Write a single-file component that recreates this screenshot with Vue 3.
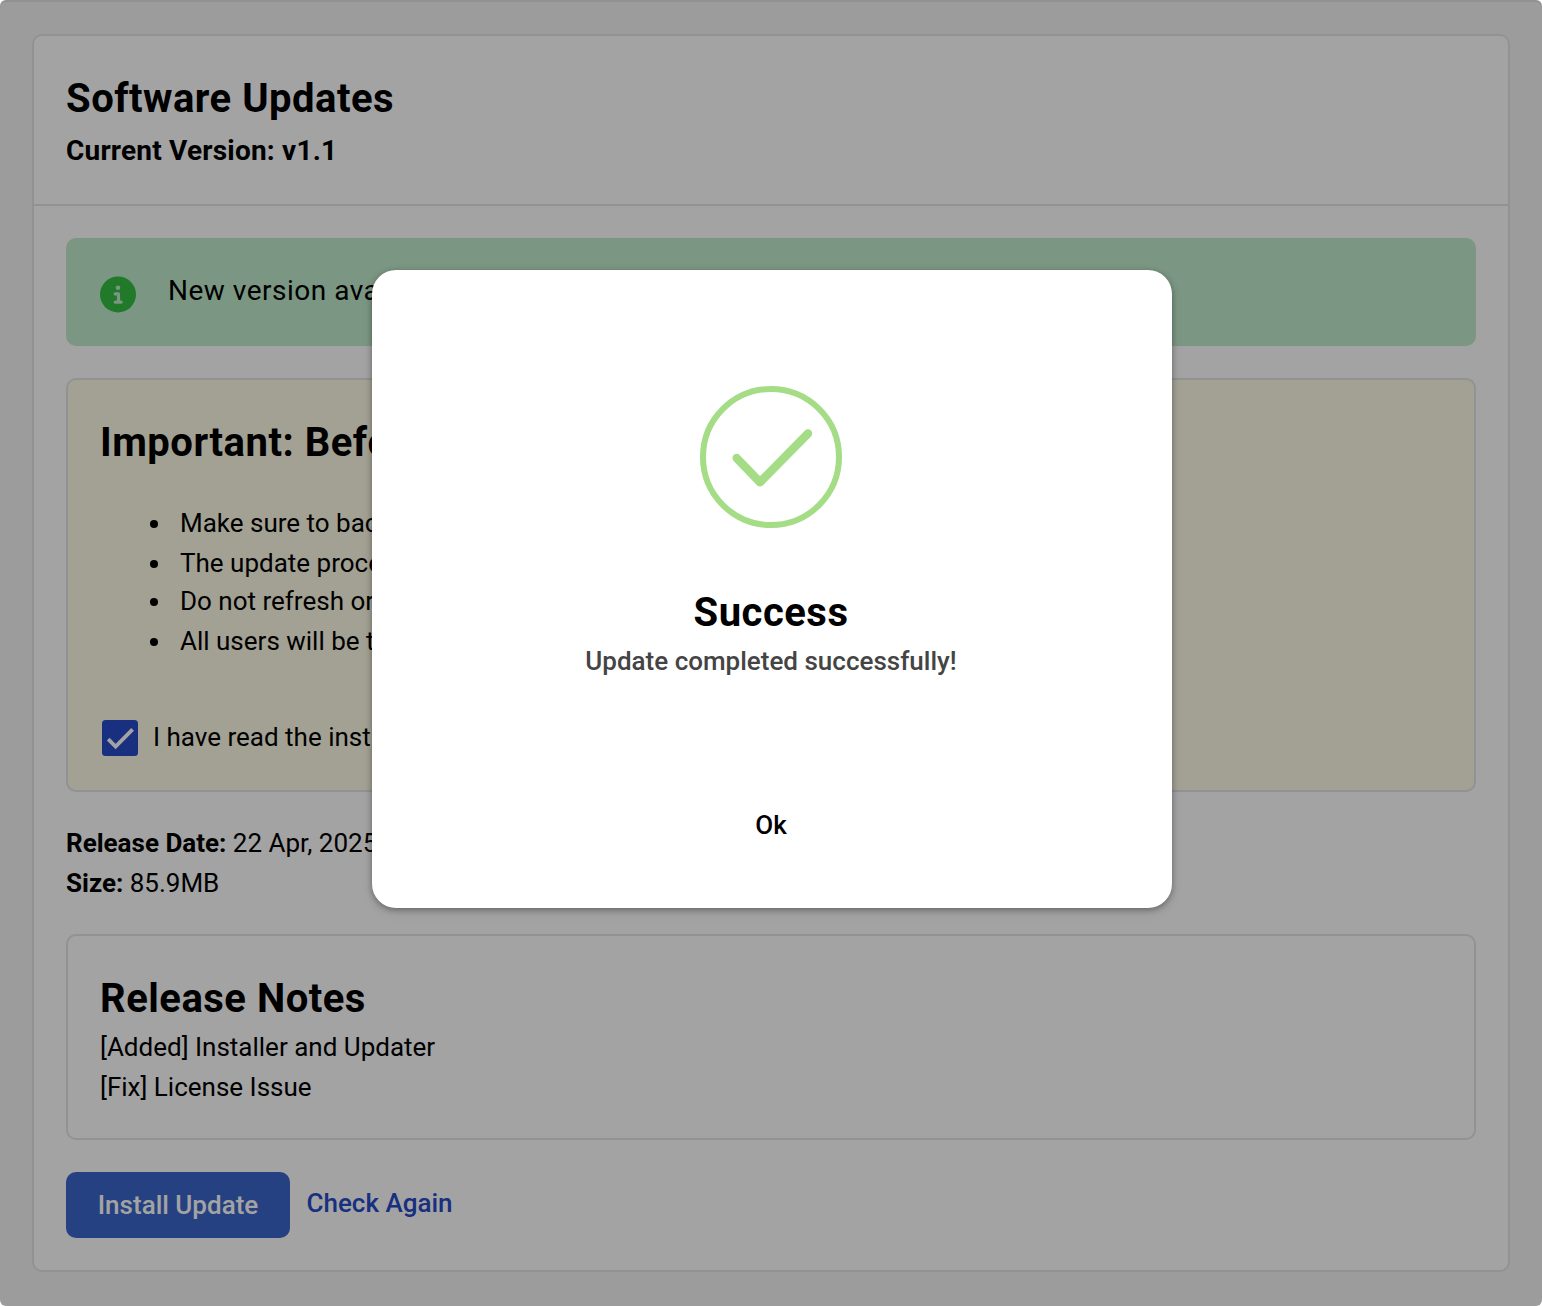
<script setup>
const steps = [
  'Make sure to backup your files and database',
  'The update process may take several minutes',
  'Do not refresh or close this window',
  'All users will be temporarily logged out',
]
const notes = ['[Added] Installer and Updater', '[Fix] License Issue']
</script>

<template>
  <div class="page">
    <main class="card">
      <header class="card-head">
        <h1 class="title">Software Updates</h1>
        <p class="version">Current Version: v1.1</p>
      </header>
      <div class="card-body">
        <section class="banner">
          <svg class="info" viewBox="0 0 36 36">
            <g transform="translate(0 0.4)">
              <circle cx="18" cy="18" r="18" fill="#34bd43" />
              <circle cx="18" cy="11.4" r="2.3" fill="#c0eccd" />
              <path d="M15.2 17.5H18.5V25.7M15.2 25.7H21.2" fill="none" stroke="#c0eccd" stroke-width="3.2" stroke-linecap="round" stroke-linejoin="round" />
            </g>
          </svg>
          <span class="banner-text">New version available</span>
        </section>
        <section class="important">
          <h2 class="title">Important: Before Updating</h2>
          <ul class="steps">
            <li v-for="step in steps" :key="step">{{ step }}</li>
          </ul>
          <label class="confirm">
            <svg class="box" viewBox="0 0 36 36">
              <rect width="36" height="36" rx="3.5" fill="#284ac8" />
              <path d="M6.2 19.2L13.6 26.6L30.6 9.4" fill="none" stroke="#fff" stroke-width="3.8" />
            </svg>
            <span>I have read the instructions</span>
          </label>
        </section>
        <div class="meta">
          <p><b>Release Date:</b> 22 Apr, 2025</p>
          <p><b>Size:</b> 85.9MB</p>
        </div>
        <section class="notes">
          <h2 class="title">Release Notes</h2>
          <p v-for="note in notes" :key="note">{{ note }}</p>
        </section>
        <div class="actions">
          <button class="install">Install Update</button>
          <button class="check">Check Again</button>
        </div>
      </div>
    </main>
    <div class="overlay">
      <div class="dialog">
        <svg class="success" viewBox="0 0 142 142">
          <circle cx="71" cy="71" r="68" fill="none" stroke="#a5dc86" stroke-width="6" />
          <path d="M36.7 72.1L60 96.2L108 47.6" fill="none" stroke="#a5dc86" stroke-width="8.5" stroke-linecap="round" stroke-linejoin="round" />
        </svg>
        <h2 class="title">Success</h2>
        <p class="message">Update completed successfully!</p>
        <button class="ok">Ok</button>
      </div>
    </div>
  </div>
</template>

<style>
body { background: #fff; }
</style>

<style scoped>
* { box-sizing: border-box; }
h1, h2, p, ul { margin: 0; padding: 0; }
button { border: 0; padding: 0; background: none; font: inherit; letter-spacing: inherit; }
.page {
  position: relative;
  width: 1542px;
  height: 1306px;
  padding: 34px 32px 32px;
  border-radius: 6px;
  overflow: hidden;
  background: #f4f4f4;
  box-shadow: inset 0 2px #e3e3e3;
  color: #000;
  font-family: Roboto, sans-serif;
  font-size: 26px;
  line-height: 40px;
}
.card {
  width: 1478px;
  height: 1238px;
  border: 2px solid #e5e5e5;
  border-radius: 10px;
  background: #fff;
}
.card-head {
  height: 170px;
  padding: 39px 32px 0;
  border-bottom: 2px solid #e5e5e5;
}
.title { font-size: 40px; line-height: 48px; font-weight: 700; letter-spacing: 0.5px; }
.version { margin-top: 8px; font-size: 28px; line-height: 40px; font-weight: 700; letter-spacing: 0.2px; }
.card-body {
  display: flex;
  flex-direction: column;
  gap: 32px;
  padding: 32px;
}
.banner {
  display: flex;
  height: 108px;
  padding: 38px 34px 0;
  border-radius: 10px;
  background: #c0eccd;
}
.info { width: 36px; height: 36px; flex: none; overflow: visible; }
.banner-text { margin: -5px 0 0 32px; font-size: 28px; letter-spacing: 0.5px; }
.important {
  height: 414px;
  padding: 39px 32px 0;
  border: 2px solid #e3e4e8;
  border-radius: 10px;
  background: #fffce6;
}
.steps { margin-top: 36px; padding-left: 50px; list-style: none; }
.steps li { display: flex; height: 40px; }
.steps li:nth-child(2) { height: 38px; }
.steps li::before {
  content: '';
  width: 8.4px;
  height: 8.4px;
  margin: 16.5px 21.6px 0 0;
  border-radius: 50%;
  background: #000;
}
.confirm { display: flex; height: 36px; margin: 59px 0 0 2px; }
.confirm span { margin: -3px 0 0 15px; }
.box { width: 36px; height: 36px; }
.meta { height: 78px; }
.meta p { position: relative; top: -1px; }
.meta b { font-weight: 700; }
.notes {
  height: 206px;
  padding: 39px 32px 0;
  border: 2px solid #e5e5e5;
  border-radius: 10px;
}
.notes .title { margin-bottom: 4px; }
.actions { display: flex; gap: 16.5px; font-weight: 500; }
.install { width: 224px; height: 66px; border-radius: 10px; background: #3a66cb; color: #fff; }
.check { height: 62px; color: #284ac8; }
.overlay {
  position: absolute;
  inset: 0;
  display: flex;
  justify-content: center;
  align-items: flex-start;
  padding: 270px 0 0 2px;
  background: rgba(0, 0, 0, 0.36);
}
.dialog {
  display: flex;
  flex-direction: column;
  align-items: center;
  width: 800px;
  height: 638px;
  padding: 116px 2px 0 0;
  border-radius: 24px;
  background: #fff;
  box-shadow: 0 2px 6px rgba(0, 0, 0, 0.35), 0 4px 14px rgba(0, 0, 0, 0.06);
}
.success { width: 142px; height: 142px; flex: none; }
.dialog .title { margin-top: 61px; }
.message { margin-top: 4px; color: #444; font-weight: 500; }
.ok { margin-top: 124px; font-weight: 500; }
</style>
